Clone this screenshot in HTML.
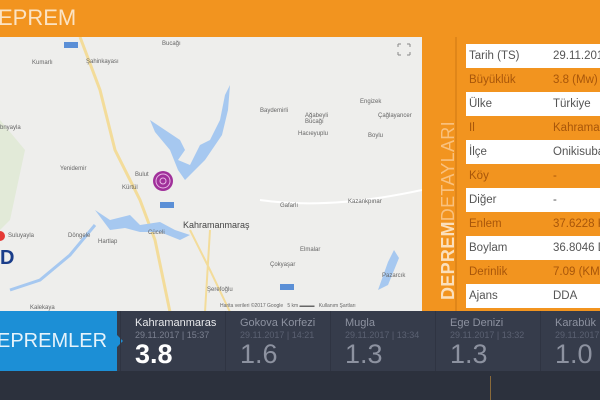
<!DOCTYPE html>
<html><head><meta charset="utf-8"><style>
*{margin:0;padding:0;box-sizing:border-box}
body{width:600px;height:400px;overflow:hidden;background:#2c313d;font-family:"Liberation Sans",sans-serif;position:relative}
.hdr{position:absolute;left:0;top:0;width:600px;height:37px;background:#f2941f}
.hdr span{position:absolute;left:-2px;top:5px;font-size:22px;color:#fbe3c4;letter-spacing:0}
.map{position:absolute;left:0;top:37px;width:422px;height:275px;background:#eeeeec;overflow:hidden}
.panel{position:absolute;left:422px;top:37px;width:178px;height:275px;background:#f2941f}
.vline{position:absolute;left:455px;top:37px;width:2px;height:275px;background:#e08619}
.vt{position:absolute;left:438px;top:300px;transform-origin:0 0;transform:rotate(-90deg);font-size:18px;white-space:nowrap;color:#fbe0bd;letter-spacing:0.3px}
.vt b{color:#fbe0bd}
.vt i{font-style:normal;color:#f9c17e}
.tw{position:absolute;left:466px;top:44px;width:134px;height:264px;overflow:hidden}
table{border-collapse:collapse;width:190px;table-layout:fixed}
td{height:24px;font-size:11.5px;padding:0 0 0 3px;white-space:nowrap;overflow:hidden}
td.v{padding-left:0}
tr.w td{background:#fff;color:#555}
tr.o td{background:#f2941f;color:#a8560a}
.bar{position:absolute;left:0;top:311px;width:600px;height:60px;background:#363c4b}
.blue{position:absolute;left:0;top:311px;width:117px;height:60px;background:#1c8fd6}
.blue:after{content:"";position:absolute;right:-6px;top:24px;border-left:6px solid #1c8fd6;border-top:6px solid transparent;border-bottom:6px solid transparent}
.blue span{position:absolute;left:-3px;top:19px;color:#e6f3fb;font-size:20px}
.it{position:absolute;top:311px;height:60px;border-left:1px solid #2f3442;overflow:hidden}
.it .n{position:absolute;left:14px;top:6px;font-size:11px;color:#8d92a0;white-space:nowrap}
.it .d{position:absolute;left:14px;top:19px;font-size:9px;color:#5b6172;white-space:nowrap}
.it .m{position:absolute;left:14px;top:28px;font-size:27px;color:#8d92a0}
.it.a .n{color:#e8e9ec}.it.a .d{color:#7b8090}.it.a .m{color:#fff;font-weight:bold}
.lbl{position:absolute;font-size:6px;color:#666;white-space:nowrap}
</style></head><body>
<div class="hdr"><span>EPREM</span></div>
<div class="map">
<svg width="422" height="275" viewBox="0 37 422 275">
<path d="M80 37 L100 90 L115 150 L140 200 L155 240 L170 312" stroke="#f3dc9a" stroke-width="3" fill="none"/>
<path d="M190 230 L210 270 L230 312 M210 230 L205 312" stroke="#f3dc9a" stroke-width="2" fill="none"/>
<path d="M260 200 Q330 210 422 190" stroke="#ffffff" stroke-width="2" fill="none"/>
<path d="M150 120 L165 130 L180 140 L185 150 L178 160 L190 165 L200 145 L210 140 L220 120 L225 95 L230 85 L228 110 L222 135 L205 160 L190 175 L185 180 L178 170 L170 150 L155 132 Z" fill="#a6c8f0"/>
<path d="M95 210 L110 220 L130 215 L140 225 L160 222 L175 230 L190 235 L180 240 L160 232 L140 232 L125 228 L110 230 Z" fill="#a6c8f0"/>
<path d="M10 290 L40 280 L70 255 L95 225" stroke="#a6c8f0" stroke-width="3" fill="none"/>
<path d="M388 262 L394 250 L399 258 L388 285 L378 290 Z" fill="#a6c8f0"/>
<path d="M0 120 L25 150 L10 220 L0 230 Z" fill="#e2ead8"/>
<circle cx="163" cy="181" r="10" fill="#a0309a"/><circle cx="163" cy="181" r="7" fill="none" stroke="#e9b6e6" stroke-width="1"/><circle cx="163" cy="181" r="3" fill="none" stroke="#e9b6e6" stroke-width="1"/>
<circle cx="0" cy="236" r="5" fill="#e53935"/>
<rect x="64" y="42" width="14" height="6" fill="#5b8fd6"/><rect x="160" y="202" width="14" height="6" fill="#5b8fd6"/><rect x="280" y="284" width="14" height="6" fill="#5b8fd6"/>
<text x="0" y="264" font-size="20" font-weight="bold" fill="#1a3d8a" font-family="Liberation Sans">D</text>
<path d="M398 44 h3 M398 44 v3 M410 44 h-3 M410 44 v3 M398 55 h3 M398 55 v-3 M410 55 h-3 M410 55 v-3" stroke="#888" stroke-width="1"/>
</svg>
<div class="lbl" style="left:162px;top:4px">Bucağı</div>
<div class="lbl" style="left:32px;top:23px">Kumarlı</div>
<div class="lbl" style="left:86px;top:22px">Şahinkayası</div>
<div class="lbl" style="left:260px;top:71px">Baydemirli</div>
<div class="lbl" style="left:305px;top:76px">Ağabeyli<br>Bucağı</div>
<div class="lbl" style="left:298px;top:94px">Hacıeyuplu</div>
<div class="lbl" style="left:360px;top:62px">Engizek</div>
<div class="lbl" style="left:378px;top:76px">Çağlayancer</div>
<div class="lbl" style="left:368px;top:96px">Boylu</div>
<div class="lbl" style="left:0px;top:88px">bnyayla</div>
<div class="lbl" style="left:60px;top:129px">Yenidemir</div>
<div class="lbl" style="left:135px;top:135px">Bulut</div>
<div class="lbl" style="left:122px;top:148px">Kürtül</div>
<div class="lbl" style="left:280px;top:166px">Gafarlı</div>
<div class="lbl" style="left:348px;top:162px">Kazankpınar</div>
<div class="lbl" style="left:183px;top:183px;font-size:9px;color:#444">Kahramanmaraş</div>
<div class="lbl" style="left:8px;top:196px">Suluyayla</div>
<div class="lbl" style="left:68px;top:196px">Döngele</div>
<div class="lbl" style="left:98px;top:202px">Hartlap</div>
<div class="lbl" style="left:148px;top:193px">Cüceli</div>
<div class="lbl" style="left:300px;top:210px">Elmalar</div>
<div class="lbl" style="left:270px;top:225px">Çokyaşar</div>
<div class="lbl" style="left:207px;top:250px">Şerefoğlu</div>
<div class="lbl" style="left:382px;top:236px">Pazarcık</div>
<div class="lbl" style="left:30px;top:268px">Kalekaya</div>
<div class="lbl" style="left:220px;top:266px;font-size:5px">Harita verileri ©2017 Google &nbsp; 5 km ▬▬▬ &nbsp; Kullanım Şartları</div>
</div>
<div class="panel"></div>
<div class="vline"></div>
<div class="vt"><b>DEPREM</b><i>DETAYLARI</i></div>
<div class="tw">
<table>
<colgroup><col style="width:87px"><col style="width:103px"></colgroup>
<tr class="w"><td>Tarih (TS)</td><td class="v">29.11.2017</td></tr>
<tr class="o"><td>Büyüklük</td><td class="v">3.8 (Mw)</td></tr>
<tr class="w"><td>Ülke</td><td class="v">Türkiye</td></tr>
<tr class="o"><td>Il</td><td class="v">Kahramanmaras</td></tr>
<tr class="w"><td>İlçe</td><td class="v">Onikisubat</td></tr>
<tr class="o"><td>Köy</td><td class="v">-</td></tr>
<tr class="w"><td>Diğer</td><td class="v">-</td></tr>
<tr class="o"><td>Enlem</td><td class="v">37.6228 K</td></tr>
<tr class="w"><td>Boylam</td><td class="v">36.8046 D</td></tr>
<tr class="o"><td>Derinlik</td><td class="v">7.09 (KM)</td></tr>
<tr class="w"><td>Ajans</td><td class="v">DDA</td></tr>
</table>
</div>
<div class="bar"></div>
<div class="blue"><span>EPREMLER</span></div>
<div class="it a" style="left:120px;width:105px"><div class="n">Kahramanmaras</div><div class="d">29.11.2017 | 15:37</div><div class="m">3.8</div></div>
<div class="it" style="left:225px;width:105px"><div class="n">Gokova Korfezi</div><div class="d">29.11.2017 | 14:21</div><div class="m">1.6</div></div>
<div class="it" style="left:330px;width:105px"><div class="n">Mugla</div><div class="d">29.11.2017 | 13:34</div><div class="m">1.3</div></div>
<div class="it" style="left:435px;width:105px"><div class="n">Ege Denizi</div><div class="d">29.11.2017 | 13:32</div><div class="m">1.3</div></div>
<div class="it" style="left:540px;width:60px"><div class="n">Karabük</div><div class="d">29.11.2017</div><div class="m">1.0</div></div>
<div style="position:absolute;left:490px;top:376px;width:1px;height:24px;background:#8a6a3a"></div>
</body></html>
